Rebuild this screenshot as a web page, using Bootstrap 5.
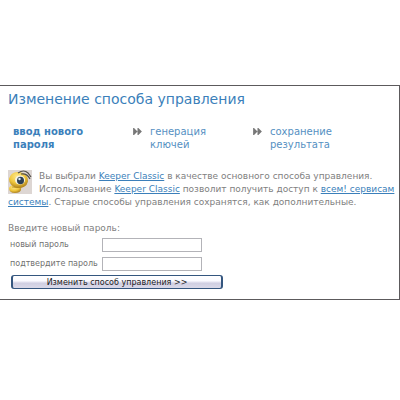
<!DOCTYPE html>
<html lang="ru">
<head>
<meta charset="utf-8">
<meta name="viewport" content="width=device-width, initial-scale=1">
<title>Изменение способа управления</title>
<link href="https://cdn.jsdelivr.net/npm/bootstrap@5.3.0/dist/css/bootstrap.min.css" rel="stylesheet">
<style>
body{font-family:"DejaVu Sans",Verdana,sans-serif;font-size:9px;line-height:13px;color:#808080;background:#fff}
.panel{margin-top:85px;border:solid #5c5a5c;border-width:1px 1px 1px 0;padding:2px 2px 10px 8px}
.title{font-size:14px;line-height:22px;color:#3b7fba;margin:0}
.steps{margin:15px 0 19px 5px;font-size:10px;line-height:13px;color:#5590c2}
.steps .current{color:#3b80bb;font-weight:700;width:120px}
.steps .next{width:120px}
.arrows{width:9px;height:7px;margin:3px 8px 0 0;flex:none}
.bee{float:left;width:24px;height:24px;margin:0 7px 0 0}
.intro a{color:#3b7fba}
.form-head{margin:13px 0 0}
.entry{font-size:8px;height:19px;margin-left:2px}
.entry label{width:92px;color:#707070;white-space:nowrap}
.entry input{width:100px;height:14px;border:1px solid #b3b3b8;border-radius:0;padding:0 2px;font-size:8px}
.submit{width:212px;height:14px;margin:2px 0 0 3px;padding:0;border:1px solid #34567f;border-width:1px 2px;border-radius:3px;background:linear-gradient(#fff 0,#fafaff 40%,#d0cfe2 60%,#dad9e9 100%);font-size:8px;line-height:11px;color:#222}
</style>
</head>
<body>
<main class="panel">
<h1 class="title fw-normal">Изменение способа управления</h1>
<ol class="steps d-flex list-unstyled">
<li class="current">ввод нового<br>пароля</li>
<li class="next d-flex"><svg class="arrows" viewBox="0 0 10 8" aria-hidden="true"><path d="M0 0h1l4 4-4 4H0zM5 0h1l4 4-4 4H5z" fill="#777"/></svg><span>генерация<br>ключей</span></li>
<li class="next d-flex"><svg class="arrows" viewBox="0 0 10 8" aria-hidden="true"><path d="M0 0h1l4 4-4 4H0zM5 0h1l4 4-4 4H5z" fill="#777"/></svg><span>сохранение<br>результата</span></li>
</ol>
<p class="intro mb-0"><svg class="bee" viewBox="0 0 24 24" aria-hidden="true">
<defs><radialGradient id="gold" cx=".4" cy=".3" r=".7"><stop offset="0" stop-color="#ffe98b"/><stop offset=".6" stop-color="#efc63c"/><stop offset="1" stop-color="#b08420"/></radialGradient></defs>
<path fill="#ddd6d3" d="M0 0h24v24H0z"/>
<path d="M1 18q2-4 8-3 5 1 4 5-1 3-6 3-6 0-6-5z" fill="url(#gold)"/>
<ellipse cx="10.500" cy="10" rx="9.500" ry="8" transform="rotate(10 10.500 10)" fill="url(#gold)"/>
<path d="M4 17q5 1 9 0" fill="none" stroke="#b88b1c" stroke-width=".8"/>
<ellipse cx="12" cy="10" rx="5" ry="4.500" fill="#f7f3e3"/>
<ellipse cx="12.500" cy="10.500" rx="3.500" ry="3.800" fill="#2e4053"/><circle cx="11.500" cy="9" r="1.200" fill="#dbe9f3"/>
<path d="M10 3q6-4 10 0l3 4M13 4q6-1 9 5" fill="none" stroke="#514d45" stroke-width="1.200"/>
</svg>Вы выбрали <a href="#">Keeper Classic</a> в качестве основного способа управления. Использование <a href="#">Keeper Classic</a> позволит получить доступ к <a href="#">всем! сервисам системы</a>. Старые способы управления сохранятся, как дополнительные.</p>
<form>
<p class="form-head">Введите новый пароль:</p>
<div class="entry d-flex align-items-center"><label for="pw">новый пароль</label><input id="pw" type="password"></div>
<div class="entry d-flex align-items-center"><label for="pw2">подтвердите пароль</label><input id="pw2" type="password"></div>
<button class="submit d-block" type="button">Изменить способ управления &gt;&gt;</button>
</form>
</main>
<script src="https://cdn.jsdelivr.net/npm/bootstrap@5.3.0/dist/js/bootstrap.bundle.min.js"></script>
</body>
</html>
